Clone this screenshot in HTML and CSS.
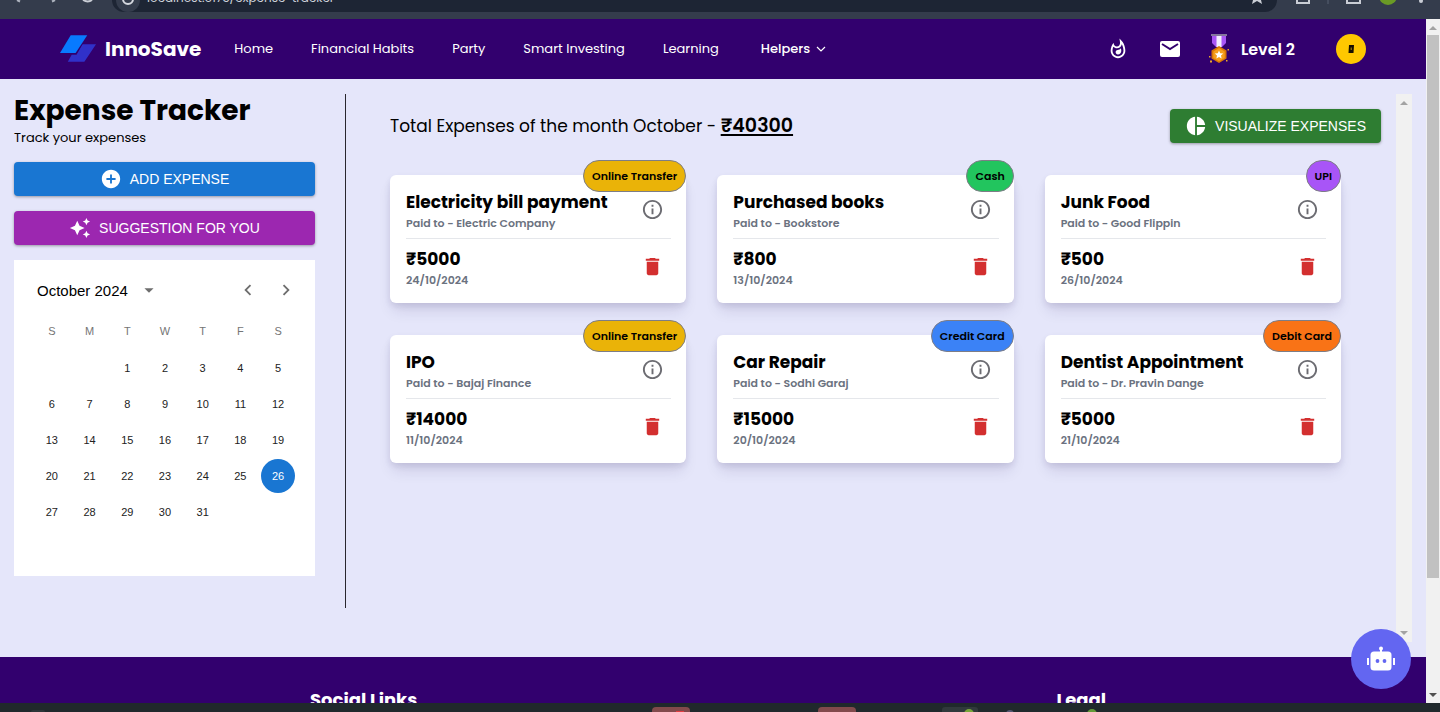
FILE: index.html
```html
<!DOCTYPE html>
<html lang="en">
<head>
<meta charset="utf-8">
<meta name="viewport" content="width=device-width, initial-scale=1">
<title>InnoSave - Expense Tracker</title>
<link rel="stylesheet" href="styles.css">
</head>
<body>
<svg class="symbols" aria-hidden="true">
  <symbol id="info" viewBox="0 0 24 24"><path d="M11 7h2v2h-2zm0 4h2v6h-2zm1-9C6.480 2 2 6.480 2 12s4.480 10 10 10 10-4.480 10-10S17.520 2 12 2m0 18c-4.410 0-8-3.590-8-8s3.590-8 8-8 8 3.590 8 8-3.590 8-8 8"/></symbol>
  <symbol id="trash" viewBox="0 0 24 24"><path d="M6 19c0 1.100.9 2 2 2h8c1.100 0 2-.9 2-2V7H6zM19 4h-3.500l-1-1h-5l-1 1H5v2h14z"/></symbol>
</svg>

<div class="browser-bar">
  <svg class="bar-icons bar-icons-left" viewBox="0 0 112 19" aria-hidden="true"><path d="M17 0l3 1.500M52 1.500l3-1.500" stroke="#aeb4bf" stroke-width="2"/><path d="M83 0q5 3 9 0" fill="none" stroke="#c9cdd5" stroke-width="2"/></svg>
  <div class="address">
    <span class="site-info"><svg viewBox="0 0 16 16" aria-hidden="true"><circle cx="8" cy="3" r="5" fill="none" stroke="#d5d8df" stroke-width="2"/></svg></span>
    <span class="url">localhost:5173/expense-tracker</span>
    <svg class="star" viewBox="0 0 16 6" aria-hidden="true"><path d="M4 0h8l1 4-5-3-5 3z" fill="#c9cdd5"/></svg>
  </div>
  <svg class="bar-icons bar-icons-right" viewBox="0 0 163 19" aria-hidden="true"><path d="M20 0v3h12V0M70 0v3h13V0" fill="none" stroke="#c9cdd5" stroke-width="2"/><path d="M51 0v4" stroke="#566072"/><circle cx="111" cy="-4" r="9" fill="#6a9a25"/><circle cx="144" cy="1" r="2" fill="#c9cdd5"/></svg>
</div>

<div class="viewport">
  <div class="page">
    <header class="navbar">
      <a class="brand" href="#">
        <svg viewBox="0 0 38 28" aria-hidden="true"><path d="M23 9h14L25 27H8l4-7h5z" fill="#3031c9"/><path d="M11 0h18L17 19H0z" fill="#32006e"/><path d="M11 0h17L16 18H0z" fill="#087aff"/></svg>
        <span>InnoSave</span>
      </a>
      <nav class="links">
        <a href="#">Home</a>
        <a href="#">Financial Habits</a>
        <a href="#">Party</a>
        <a href="#">Smart Investing</a>
        <a href="#">Learning</a>
        <button class="helpers" type="button">Helpers <svg viewBox="0 0 10 10" aria-hidden="true"><path d="M1 3l4 4 4-4" fill="none" stroke="currentColor" stroke-width="1.200"/></svg></button>
      </nav>
      <div class="nav-tools">
        <button class="tool" type="button" aria-label="Streak"><svg viewBox="0 0 24 24" aria-hidden="true"><path fill="#fff" d="M11.570 13.160c-1.360.28-2.170 1.160-2.170 2.410 0 1.340 1.110 2.420 2.490 2.420 2.050 0 3.710-1.660 3.710-3.710 0-1.070-.15-2.120-.46-3.120-.79 1.070-2.200 1.720-3.570 2zM13.500.67s.74 2.650.74 4.800c0 2.060-1.350 3.730-3.410 3.730-2.070 0-3.630-1.670-3.630-3.730l.03-.36C5.210 7.510 4 10.620 4 14c0 4.420 3.580 8 8 8s8-3.580 8-8C20 8.610 17.410 3.800 13.500.67zM12 20c-3.310 0-6-2.690-6-6 0-1.530.3-3.040.86-4.430 1.010 1.010 2.410 1.630 3.970 1.630 2.660 0 4.750-1.830 5.280-4.430C17.340 8.970 18 11.440 18 14c0 3.310-2.690 6-6 6z"/></svg></button>
        <button class="tool" type="button" aria-label="Messages"><svg viewBox="0 0 22 22" aria-hidden="true"><rect x="1" y="3" width="20" height="16" rx="2" fill="#fff"/><path d="M3 6l8 5 8-5" fill="none" stroke="#32006e" stroke-width="2"/></svg></button>
        <div class="level">
          <svg viewBox="0 0 22 30" aria-hidden="true"><path d="M4 1h14v8l-4 4H8l-4-4z" fill="#a955f5"/><path d="M8.500 1h5v12h-5z" fill="#f4edff"/><path d="M3 0h16v2H3z" fill="#85779c"/><path d="M11 12l7.500 4.500v8L11 29l-7.500-4.500v-8z" fill="#d97706"/><path d="M11 14l5.700 3.500v6.500L11 27.300 5.300 24v-6.500z" fill="#f59e1b"/><path d="M11 16.500l1.200 2.700 3 .3-2.200 2 .6 2.900-2.600-1.500-2.600 1.500.6-2.900-2.200-2 3-.3z" fill="#fff"/><path d="M1 22h1.500v1.500H1zM2 26.500h2v2H2zM19.500 15H21v1.500h-1.500zM18 26h1.500v1.500H18z" fill="#e8a52b"/></svg>
          <span>Level 2</span>
        </div>
        <button class="avatar" type="button" aria-label="Profile"><svg viewBox="0 0 10 12" aria-hidden="true"><path d="M3 2h5l-.5 8h-5z" fill="#171000"/><path d="M5.200 4.500v2.500" stroke="#bd9600"/></svg></button>
      </div>
    </header>

    <main class="main">
      <aside class="sidebar">
        <div class="intro">
          <h1>Expense Tracker</h1>
          <p>Track your expenses</p>
        </div>
        <button class="btn btn-blue" type="button"><svg viewBox="0 0 24 24" aria-hidden="true"><path d="M12 2C6.480 2 2 6.480 2 12s4.480 10 10 10 10-4.480 10-10S17.520 2 12 2m5 11h-4v4h-2v-4H7v-2h4V7h2v4h4z"/></svg>ADD EXPENSE</button>
        <button class="btn btn-purple" type="button"><svg viewBox="0 0 24 24" aria-hidden="true"><path d="m19 9 1.250-2.750L23 5l-2.750-1.250L19 1l-1.250 2.750L15 5l2.750 1.250zm-7.500.5L9 4 6.500 9.500 1 12l5.500 2.500L9 20l2.500-5.500L17 12zM19 15l-1.250 2.750L15 19l2.750 1.250L19 23l1.250-2.750L23 19l-2.750-1.250z"/></svg>SUGGESTION FOR YOU</button>
        <section class="calendar" aria-label="Calendar">
          <div class="cal-head">
            <button class="month" type="button">October 2024 <svg viewBox="0 0 24 24" aria-hidden="true"><path d="m7 10 5 5 5-5z"/></svg></button>
            <div class="cal-nav">
              <button type="button" aria-label="Previous month"><svg viewBox="0 0 24 24" aria-hidden="true"><path d="M15.410 7.410 14 6l-6 6 6 6 1.410-1.410L10.830 12z"/></svg></button>
              <button type="button" aria-label="Next month"><svg viewBox="0 0 24 24" aria-hidden="true"><path d="M10 6 8.590 7.410 13.170 12l-4.580 4.590L10 18l6-6z"/></svg></button>
            </div>
          </div>
          <table class="days">
            <thead><tr><th>S</th><th>M</th><th>T</th><th>W</th><th>T</th><th>F</th><th>S</th></tr></thead>
            <tbody>
              <tr><td></td><td></td><td><button>1</button></td><td><button>2</button></td><td><button>3</button></td><td><button>4</button></td><td><button>5</button></td></tr>
              <tr><td><button>6</button></td><td><button>7</button></td><td><button>8</button></td><td><button>9</button></td><td><button>10</button></td><td><button>11</button></td><td><button>12</button></td></tr>
              <tr><td><button>13</button></td><td><button>14</button></td><td><button>15</button></td><td><button>16</button></td><td><button>17</button></td><td><button>18</button></td><td><button>19</button></td></tr>
              <tr><td><button>20</button></td><td><button>21</button></td><td><button>22</button></td><td><button>23</button></td><td><button>24</button></td><td><button>25</button></td><td><button class="selected">26</button></td></tr>
              <tr><td><button>27</button></td><td><button>28</button></td><td><button>29</button></td><td><button>30</button></td><td><button>31</button></td><td></td><td></td></tr>
            </tbody>
          </table>
        </section>
      </aside>

      <section class="expenses">
        <div class="expenses-body">
          <div class="summary">
            <p>Total Expenses of the month October - <strong>₹40300</strong></p>
            <button class="btn btn-green" type="button"><svg viewBox="0 0 24 24" aria-hidden="true"><path d="M11 2v20c-5.070-.5-9-4.790-9-10s3.930-9.500 9-10m2.030 0v8.990H22c-.47-4.740-4.240-8.520-8.970-8.990m0 11.010V22c4.740-.47 8.500-4.250 8.970-8.990z"/></svg>VISUALIZE EXPENSES</button>
          </div>
          <div class="cards">
            <article class="card">
              <span class="badge online">Online Transfer</span>
              <div class="row top"><div><h2>Electricity bill payment</h2><p>Paid to - Electric Company</p></div><button class="icon" type="button" aria-label="Details"><svg><use href="#info"/></svg></button></div>
              <div class="row"><div><h2>₹5000</h2><p>24/10/2024</p></div><button class="icon delete" type="button" aria-label="Delete"><svg><use href="#trash"/></svg></button></div>
            </article>
            <article class="card">
              <span class="badge cash">Cash</span>
              <div class="row top"><div><h2>Purchased books</h2><p>Paid to - Bookstore</p></div><button class="icon" type="button" aria-label="Details"><svg><use href="#info"/></svg></button></div>
              <div class="row"><div><h2>₹800</h2><p>13/10/2024</p></div><button class="icon delete" type="button" aria-label="Delete"><svg><use href="#trash"/></svg></button></div>
            </article>
            <article class="card">
              <span class="badge upi">UPI</span>
              <div class="row top"><div><h2>Junk Food</h2><p>Paid to - Good Flippin</p></div><button class="icon" type="button" aria-label="Details"><svg><use href="#info"/></svg></button></div>
              <div class="row"><div><h2>₹500</h2><p>26/10/2024</p></div><button class="icon delete" type="button" aria-label="Delete"><svg><use href="#trash"/></svg></button></div>
            </article>
            <article class="card">
              <span class="badge online">Online Transfer</span>
              <div class="row top"><div><h2>IPO</h2><p>Paid to - Bajaj Finance</p></div><button class="icon" type="button" aria-label="Details"><svg><use href="#info"/></svg></button></div>
              <div class="row"><div><h2>₹14000</h2><p>11/10/2024</p></div><button class="icon delete" type="button" aria-label="Delete"><svg><use href="#trash"/></svg></button></div>
            </article>
            <article class="card">
              <span class="badge credit">Credit Card</span>
              <div class="row top"><div><h2>Car Repair</h2><p>Paid to - Sodhi Garaj</p></div><button class="icon" type="button" aria-label="Details"><svg><use href="#info"/></svg></button></div>
              <div class="row"><div><h2>₹15000</h2><p>20/10/2024</p></div><button class="icon delete" type="button" aria-label="Delete"><svg><use href="#trash"/></svg></button></div>
            </article>
            <article class="card">
              <span class="badge debit">Debit Card</span>
              <div class="row top"><div><h2>Dentist Appointment</h2><p>Paid to - Dr. Pravin Dange</p></div><button class="icon" type="button" aria-label="Details"><svg><use href="#info"/></svg></button></div>
              <div class="row"><div><h2>₹5000</h2><p>21/10/2024</p></div><button class="icon delete" type="button" aria-label="Delete"><svg><use href="#trash"/></svg></button></div>
            </article>
          </div>
        </div>
        <div class="scroll inner" aria-hidden="true"><i class="up"></i><i class="down"></i></div>
      </section>
    </main>

    <footer class="footer"><h2>Social Links</h2><h2>Legal</h2></footer>

    <button class="chat" type="button" aria-label="Open assistant"><svg viewBox="0 0 30 26" aria-hidden="true"><circle cx="15" cy="2.500" r="2" fill="#fff"/><path d="M14 3h2v4h-2z" fill="#fff"/><rect x="4.500" y="5.500" width="21" height="19" rx="3.500" fill="#fff"/><path d="M1 12h2v7H1zM27 12h2v7h-2z" fill="#fff"/><circle cx="11.500" cy="15" r="1.900" fill="#6366f1"/><circle cx="18.500" cy="15" r="1.900" fill="#6366f1"/></svg></button>
  </div>
  <div class="scroll outer" aria-hidden="true"><i class="up"></i><b class="thumb"></b><i class="down"></i></div>
</div>

<div class="taskbar">
  <svg viewBox="0 0 1440 9" preserveAspectRatio="xMidYMin slice" aria-hidden="true"><rect x="31" y="7" width="14" height="5" rx="2" fill="#2c3538"/><rect x="652" y="4" width="38" height="12" rx="4" fill="#824a4c"/><rect x="818" y="4" width="38" height="12" rx="4" fill="#824a4c"/><path d="M676 9h8" stroke="#e23c40" stroke-width="2"/><rect x="942" y="4" width="36" height="12" rx="3" fill="#30393c"/><circle cx="969" cy="11" r="5" fill="#78a63a"/><circle cx="1010" cy="11" r="4" fill="#555873"/><circle cx="1092" cy="11" r="5" fill="#649a38"/></svg>
</div>
</body>
</html>
```
FILE: styles.css
```css
* { box-sizing: border-box; }

body {
  margin: 0;
  height: 100vh;
  display: flex;
  flex-direction: column;
  overflow: hidden;
  font-family: Poppins, Inter, "Noto Sans", sans-serif;
  font-size: 14px;
  color: #000;
  background: #e5e6fa;
}

h1, h2, p { margin: 0; }
a { color: inherit; text-decoration: none; }
button { font: inherit; color: inherit; border: 0; padding: 0; background: none; cursor: pointer; }
svg { display: block; }
.symbols { position: absolute; width: 0; height: 0; }

/* Browser frame */
.browser-bar {
  flex: 0 0 19px;
  display: flex;
  align-items: flex-start;
  background: #343c4c;
  overflow: hidden;
}
.bar-icons { height: 19px; flex: none; }
.bar-icons-left { width: 112px; }
.bar-icons-right { width: 163px; }
.address {
  flex: 1;
  height: 12px;
  display: flex;
  align-items: flex-end;
  border-radius: 0 0 14px 14px;
  padding: 0 12px 0 4px;
  background: #1d2534;
  color: #ced2da;
  font-size: 12px;
  line-height: 18px;
}
.site-info { width: 24px; height: 12px; padding: 0 4px; margin-right: 7px; border-radius: 0 0 12px 12px; background: #343c4c; overflow: hidden; }
.site-info svg { width: 16px; height: 16px; margin-top: -4px; }
.url { padding-bottom: 5px; }
.star { width: 16px; height: 6px; margin-left: auto; align-self: flex-start; }

.viewport { flex: 1; min-height: 0; display: flex; overflow: hidden; }
.page { position: relative; flex: 1; min-width: 0; display: flex; flex-direction: column; }

/* Navigation */
.navbar {
  flex: 0 0 60px;
  display: flex;
  align-items: center;
  padding: 0 60px;
  background: #32006e;
  color: #fff;
}
.brand { display: flex; align-items: center; gap: 8px; font-size: 20px; font-weight: 700; }
.brand svg { width: 37px; height: 28px; }
.links { display: flex; align-items: center; gap: 38px; margin-left: 33px; font-size: 13px; white-space: nowrap; }
.helpers { display: flex; align-items: center; gap: 6px; font-weight: 500; margin-left: 4px; }
.helpers svg { width: 10px; height: 10px; }
.nav-tools { display: flex; align-items: center; margin-left: auto; }
.tool { margin-right: 30px; }
.tool svg { width: 22px; height: 22px; }
.tool + .level, .level { display: flex; align-items: center; gap: 11px; margin-left: -3px; margin-right: 41px; font-size: 16px; font-weight: 600; white-space: nowrap; }
.level svg { width: 22px; height: 30px; }
.avatar { width: 30px; height: 30px; display: grid; place-items: center; border-radius: 50%; background: #ffc800; }
.avatar svg { width: 10px; height: 12px; }

/* Main area */
.main { flex: 1; min-height: 0; display: flex; padding: 15px 14px; }
.sidebar {
  flex: 0 0 332px;
  display: flex;
  flex-direction: column;
  gap: 15px;
  padding-right: 30px;
  margin-bottom: 34px;
  border-right: 1px solid #29272e;
}
.intro h1 { font-size: 28px; line-height: 34px; font-weight: 700; }
.intro p { font-size: 13px; line-height: 19px; }
.btn {
  height: 34px;
  flex: none;
  display: flex;
  align-items: center;
  justify-content: center;
  gap: 8px;
  padding: 0 15px;
  border-radius: 4px;
  color: #fff;
  font-family: "Liberation Sans", Arial, sans-serif;
  font-size: 14px;
  white-space: nowrap;
  box-shadow: 0 1px 3px rgba(0, 0, 0, .35);
}
.btn svg { width: 22px; height: 22px; fill: currentColor; }
.btn-blue { background: #1976d2; }
.btn-purple { background: #9c27b0; }
.btn-green { background: #2e7d32; }

/* Calendar */
.calendar { flex: 0 0 316px; padding: 15px 18px 15px 19px; background: #fff; font-family: "Liberation Sans", Arial, sans-serif; }
.cal-head { height: 30px; display: flex; align-items: center; justify-content: space-between; padding-left: 4px; }
.month { display: flex; align-items: center; gap: 10px; font-size: 15px; }
.cal-head svg { width: 22px; height: 22px; fill: #6e6e6e; }
.cal-nav { display: flex; gap: 16px; }
.days { width: 100%; table-layout: fixed; border-collapse: collapse; font-size: 11px; text-align: center; }
.days th { height: 45px; padding: 7px 0 0; font-weight: 400; color: #757575; }
.days td { height: 36px; padding: 0; color: #222; }
.days button { width: 34px; height: 34px; border-radius: 50%; }
.days .selected { color: #fff; background: #1976d2; }

/* Expense list */
.expenses { flex: 1; min-width: 0; display: flex; }
.expenses-body { flex: 1; min-width: 0; padding: 15px 15px 0 44px; }
.summary { display: flex; align-items: center; justify-content: space-between; margin-bottom: 32px; }
.summary p { font-size: 17px; line-height: 24px; }
.summary strong { font-size: 19px; font-weight: 600; text-decoration: underline; text-underline-offset: 2px; text-decoration-thickness: 2px; }
.cards { display: grid; grid-template-columns: repeat(3, 1fr); gap: 32px 31px; padding-right: 40px; }
.card {
  position: relative;
  padding: 15px 15px 14px 16px;
  border-radius: 6px;
  background: #fff;
  box-shadow: 0 10px 15px -3px rgba(30, 20, 80, .12), 0 3px 6px rgba(30, 20, 80, .1);
}
.row { display: flex; align-items: center; justify-content: space-between; }
.row.top { padding-bottom: 6px; margin-bottom: 8px; border-bottom: 1px solid #e5e7eb; }
.card h2 { font-size: 17px; line-height: 24px; font-weight: 700; }
.card p { font-size: 11px; line-height: 18px; font-weight: 600; color: #6b7280; }
.icon { margin-right: 7px; padding-bottom: 3px; fill: #6c6c72; }
.icon svg { width: 23px; height: 23px; }
.delete { fill: #d32f2f; }
.badge {
  position: absolute;
  top: -15px;
  right: 0;
  height: 32px;
  padding: 0 8px;
  border: 1px solid #7d7d86;
  border-radius: 16px;
  font-size: 11px;
  line-height: 30px;
  font-weight: 600;
}
.online { background: #eab308; }
.cash { background: #22c55e; }
.upi { background: #a855f7; }
.credit { background: #3b82f6; }
.debit { background: #f97316; }

/* Scroll tracks */
.scroll { flex: none; display: flex; flex-direction: column; align-items: center; background: #f1f1f1; }
.scroll i { width: 0; height: 0; border: 4px solid transparent; }
.scroll .up { border-top: 0; border-bottom-color: #a3a3a3; }
.scroll .down { border-bottom: 0; border-top-color: #a3a3a3; }
.inner { width: 16px; padding: 7px 0; justify-content: space-between; }
.outer { width: 14px; padding: 7px 0 6px; }
.outer .thumb { width: 12px; height: 543px; flex: 0 1 auto; margin-top: 5px; background: #c1c1c1; }
.outer .down { margin-top: auto; border-top-color: #505050; }

.footer {
  flex: 0 0 46px;
  display: flex;
  justify-content: space-between;
  padding: 31px 320px 0 310px;
  background: #32006e;
  color: #fff;
  overflow: hidden;
}
.footer h2 { font-size: 18px; line-height: 24px; font-weight: 700; }
.chat {
  position: absolute;
  right: 15px;
  bottom: 14px;
  width: 60px;
  height: 60px;
  display: grid;
  place-items: center;
  border-radius: 50%;
  background: #6366f1;
}
.chat svg { width: 30px; height: 26px; }

.taskbar { flex: 0 0 9px; background: #20292c; overflow: hidden; }
.taskbar svg { width: 100%; height: 9px; }
```
